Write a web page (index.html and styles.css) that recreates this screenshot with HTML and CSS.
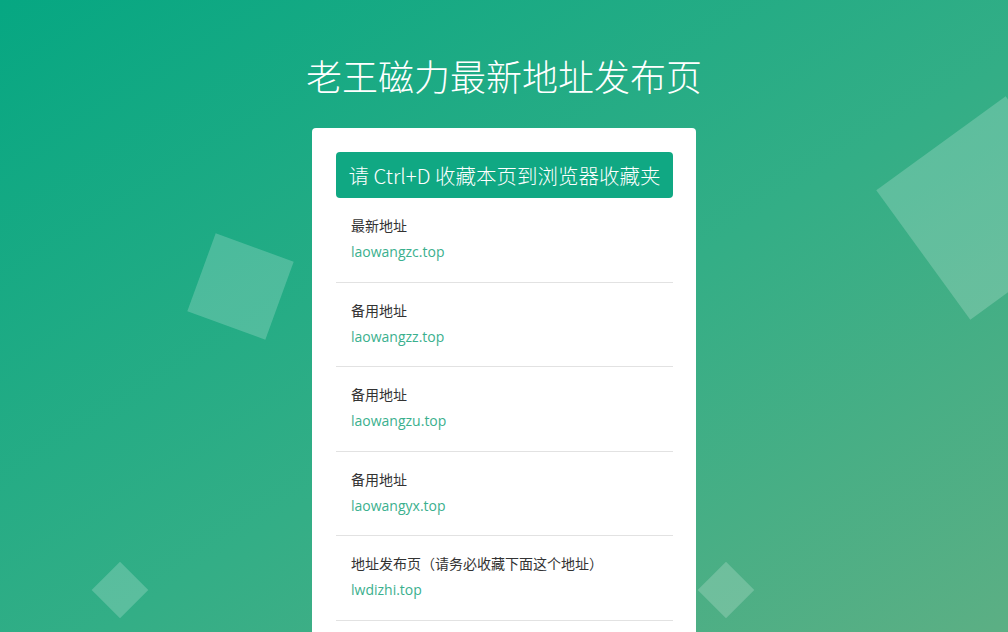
FILE: index.html
```html
<!DOCTYPE html>
<html lang="zh-CN">
<head>
  <meta charset="UTF-8">
  <meta name="viewport" content="width=device-width, initial-scale=1.0">
  <title>老王磁力最新地址发布页</title>
  <link rel="stylesheet" href="styles.css">
</head>
<body>
  <!-- floating squares in the background -->
  <div class="bubbles">
    <div class="bubble bubble-a"></div>
    <div class="bubble bubble-b"></div>
    <div class="bubble bubble-c"></div>
    <div class="bubble bubble-d"></div>
  </div>

  <div class="wrap">
    <h1>老王磁力最新地址发布页</h1>

    <div class="card">
      <div class="notice">请 Ctrl+D 收藏本页到浏览器收藏夹</div>

      <ul class="links">
        <li>
          <div class="label">最新地址</div>
          <a href="#">laowangzc.top</a>
        </li>
        <li>
          <div class="label">备用地址</div>
          <a href="#">laowangzz.top</a>
        </li>
        <li>
          <div class="label">备用地址</div>
          <a href="#">laowangzu.top</a>
        </li>
        <li>
          <div class="label">备用地址</div>
          <a href="#">laowangyx.top</a>
        </li>
        <li>
          <div class="label">地址发布页（请务必收藏下面这个地址）</div>
          <a href="#">lwdizhi.top</a>
        </li>
      </ul>
    </div>
  </div>
</body>
</html>
```

FILE: styles.css
```css
html, body {
  margin: 0;
  height: 100%;
}
body {
  font-family: "Noto Sans CJK SC", "Noto Sans", sans-serif;
  background: linear-gradient(to bottom right, #06a782 0%, #33ae86 55%, #5caf84 100%);
  overflow: hidden;
  position: relative;
  color: #333;
}
.bubbles {
  position: absolute;
  left: 0;
  top: 0;
  right: 0;
  bottom: 0;
  overflow: hidden;
}
.wrap {
  position: relative;
  padding-top: 50px;
}
h1 {
  margin: 0;
  text-align: center;
  color: #fff;
  font-size: 36px;
  font-weight: 300;
  line-height: 50px;
  white-space: nowrap;
}
.card {
  width: 384px;
  box-sizing: border-box;
  margin: 28px auto 0;
  background: #fff;
  border-radius: 4px;
  padding: 24px 23px 40px 24px;
}
.notice {
  background: #10a883;
  color: #fff;
  border-radius: 4px;
  height: 46px;
  line-height: 46px;
  text-align: center;
  font-size: 20.5px;
  font-weight: 300;
  white-space: nowrap;
}
.links {
  list-style: none;
  margin: 0;
  padding: 0;
}
.links li {
  padding: 17px 15px 19.5px;
  border-bottom: 1px solid #e2e2e2;
}
.label {
  font-size: 14px;
  line-height: 20px;
  color: #333;
}
.links a {
  display: block;
  margin-top: 7px;
  font-family: "Open Sans", "Noto Sans", sans-serif;
  font-size: 14px;
  line-height: 20px;
  color: #3bb08e;
  text-decoration: none;
}
.bubble {
  position: absolute;
  background: rgba(255, 255, 255, 0.2);
}
.bubble-a {
  width: 83px;
  height: 83px;
  left: 199px;
  top: 245px;
  transform: rotate(20deg);
}
.bubble-b {
  width: 160px;
  height: 160px;
  left: 908px;
  top: 128px;
  transform: rotate(54deg);
}
.bubble-c {
  width: 40px;
  height: 40px;
  left: 100px;
  top: 570px;
  transform: rotate(45deg);
}
.bubble-d {
  width: 40px;
  height: 40px;
  left: 706px;
  top: 570px;
  transform: rotate(45deg);
}
```
